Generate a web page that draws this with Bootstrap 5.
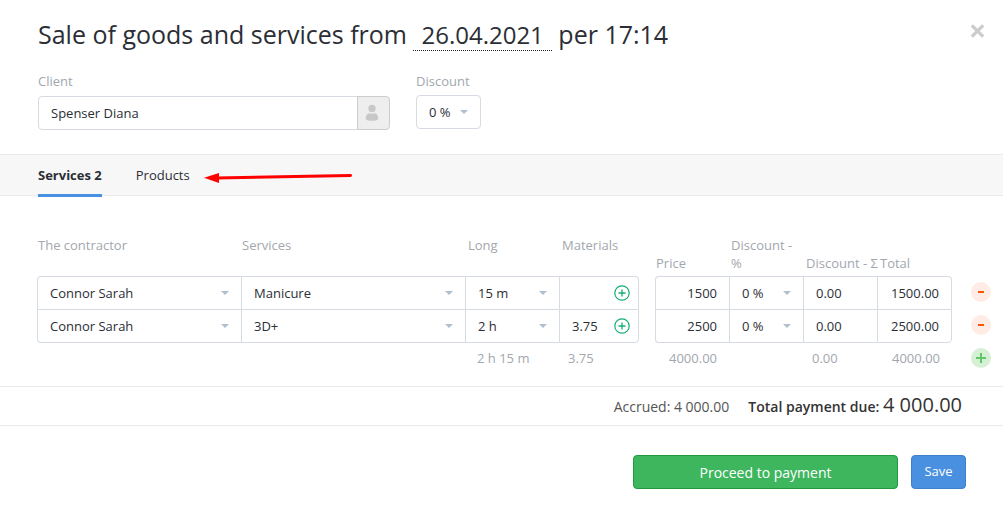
<!DOCTYPE html>
<html lang="en">
<head>
<meta charset="utf-8">
<meta name="viewport" content="width=device-width, initial-scale=1">
<title>Sale of goods and services</title>
<link rel="stylesheet" href="https://cdn.jsdelivr.net/npm/bootstrap@5.3.0/dist/css/bootstrap.min.css">
<style>
  body { font-family: "Open Sans", sans-serif; font-size: 13px; line-height: 18px; color: #2b2e35; background: #fff; }
  .sheet-head { padding: 16px 17px 24px 38px; }
  .sheet-title { font-size: 25px; line-height: 36px; font-weight: 400; color: #2b2e35; }
  .date-link { color: inherit; text-decoration: none; font-size: 24px; padding: 0 8px; border-bottom: 1px dotted #1f2229; line-height: 30px; display: inline-block; }
  .close-x { width: 16px; height: 16px; margin: 7px 0 0; color: #ccc; line-height: 0; }
  .muted-text, .sale-table th, .sale-table tfoot td { color: #a2a7ae; font-weight: 400; }
  .fields { gap: 26px; }
  .client-box { width: 352px; max-width: 100%; }
  .fields label { margin-bottom: 6px; }
  .fields .discount-box label { margin-bottom: 5px; }
  .fields .form-control, .fields .form-select { height: 34px; font-size: 13px; line-height: 18px; border-color: #d5dae3; border-radius: 4px; color: #2b2e35; padding: 0 12px; }
  .user-btn { width: 33px; background: #eee; border: 1px solid #ccc; border-radius: 4px; line-height: 0; }
  select.arrow-select { appearance: none; -webkit-appearance: none; background: #fff url("data:image/svg+xml,%3Csvg xmlns='http://www.w3.org/2000/svg' viewBox='0 0 8 4'%3E%3Cpath d='M0 0h8L4 4z' fill='%23afbfd0'/%3E%3C/svg%3E") no-repeat right 12px center / 8px 4px; }
  .fields .discount-select { width: 65px; }
  .tab-strip { background: #f7f7f7; border-top: 1px solid #ebebeb; border-bottom: 1px solid #ebebeb; padding-left: 38px; }
  .tab-strip .nav { gap: 34px; height: 40px; margin-bottom: 0; }
  .tab-strip .nav-link { padding: 11px 0 10px; height: 42px; color: #2b2e35; font-size: 13px; line-height: 18px; border-bottom: 3px solid transparent; border-radius: 0; }
  .tab-strip .nav-link.active { font-weight: 700; border-color: #4a90e2; }
  .hint-arrow { margin: 17px 0 0 14px; }
  .sale-area { padding: 40px 0 12px 37px; }
  .sale-table { width: 100%; table-layout: fixed; border-collapse: separate; border-spacing: 0; }
  .sale-table th { height: 40px; padding: 0 0 4px 1px; vertical-align: bottom; white-space: nowrap; }
  .sale-table th.high { vertical-align: top; }
  .sale-table th.inset { padding-left: 3px; }
  .sale-table th.wraps { white-space: normal; padding-left: 2px; }
  .sale-table .cell { height: 33px; padding: 0; border-top: 1px solid #d5dae3; border-left: 1px solid #d5dae3; }
  .sale-table .cell.last { border-right: 1px solid #d5dae3; }
  .sale-table .end .cell { height: 34px; border-bottom: 1px solid #d5dae3; }
  .start .cell.first { border-top-left-radius: 4px; }
  .start .cell.last { border-top-right-radius: 4px; }
  .end .cell.first { border-bottom-left-radius: 4px; }
  .end .cell.last { border-bottom-right-radius: 4px; }
  .cell input, .cell select { display: block; width: 100%; height: 32px; border: 0; padding: 0 12px; color: #2b2e35; background-color: transparent; font-size: 13px; }
  .cell input.mat { flex: 1 1 0; min-width: 0; padding-right: 0; }
  .sale-table tfoot td { height: 31px; padding: 0 12px 2px; vertical-align: middle; white-space: nowrap; }
  .sale-table tfoot td.near { padding-left: 9px; }
  .sale-table td.act, .sale-table tfoot td.act { padding: 0 12px 2px 0; vertical-align: middle; text-align: right; line-height: 0; }
  .round-btn { width: 20px; height: 20px; border: 0; border-radius: 50%; padding: 0; display: inline-block; vertical-align: middle; line-height: 0; }
  .round-btn svg { display: block; }
  .btn-del { background: #ffece4; color: #ff5500; }
  .btn-add { background: #d5f0d5; color: #61c76a; }
  .mat-btn { width: 16px; height: 16px; padding: 0; border: 0; background: none; color: #13ae73; margin-right: 8px; line-height: 0; }
  .sum-bar { border-top: 1px solid #ebebeb; border-bottom: 1px solid #ebebeb; min-height: 40px; padding: 3px 41px 0 0; font-size: 14px; line-height: 30px; color: #333; gap: 19px; }
  .sum-bar .accrued { color: #555; }
  .sum-bar .due { font-weight: 600; }
  .sum-bar .amount { font-size: 20px; font-weight: 500; }
  .actions { padding: 29px 37px 24px; gap: 13px; }
  .actions .btn { height: 34px; padding: 0; border-radius: 4px; color: #fff; font-size: 13px; }
  .actions .pay { width: 265px; background: #3db65e; border-color: #1f9a3c; font-size: 14px; font-weight: 500; }
  .actions .save { width: 55px; background: #4a90e0; border-color: #3e7fc9; }
</style>
</head>
<body>
<main>
  <header class="sheet-head">
    <div class="d-flex justify-content-between align-items-start">
      <h1 class="sheet-title mb-0">Sale of goods and services from <a class="date-link" href="#">26.04.2021</a> per 17:14</h1>
      <button type="button" class="close-x btn p-0 border-0" aria-label="Close"><svg width="16" height="16" viewBox="0 0 16 16"><path d="M1.800 2.400 13.200 13.600M13.200 2.400 1.800 13.600" stroke="currentColor" stroke-width="3.400" fill="none"/></svg></button>
    </div>
    <form class="fields d-flex align-items-start flex-wrap">
      <div class="client-box mt-3 pt-1">
        <label class="muted-text d-block" for="client">Client</label>
        <div class="input-group flex-nowrap">
          <input id="client" class="form-control" type="text" value="Spenser Diana">
          <button type="button" class="user-btn btn p-0 pe-1" aria-label="Client card"><svg width="14" height="18" viewBox="0 0 14 18"><circle cx="7" cy="4.500" r="3.700" fill="#c8c8c8"/><path d="M.7 14.500C.7 11 3 9.300 4.700 9.300c1.400.7 3.200.7 4.600 0 1.700 0 4 1.700 4 5.200 0 1.700-2 2.300-6.300 2.300S.7 16.200.7 14.500z" fill="#c8c8c8"/></svg></button>
        </div>
      </div>
      <div class="discount-box mt-3 pt-1">
        <label class="muted-text d-block" for="disc">Discount</label>
        <select id="disc" class="form-select arrow-select discount-select"><option>0 %</option></select>
      </div>
    </form>
  </header>

  <div class="tab-strip d-flex">
    <ul class="nav">
      <li class="nav-item"><a class="nav-link active" href="#services">Services 2</a></li>
      <li class="nav-item"><a class="nav-link" href="#products">Products</a></li>
    </ul>
    <svg class="hint-arrow" width="149" height="12" viewBox="0 0 149 12" aria-hidden="true"><path d="M12 6 146.500 3.500" stroke="#f00" stroke-width="3" stroke-linecap="round"/><path d="M0 5.800 15 1v10z" fill="#f00"/></svg>
  </div>

  <section class="sale-area" id="services">
    <table class="sale-table">
      <colgroup><col style="width:204px"><col><col style="width:94px"><col style="width:80px"><col style="width:16px"><col style="width:74px"><col style="width:74px"><col style="width:74px"><col style="width:75px"><col style="width:51px"></colgroup>
      <thead>
        <tr>
          <th class="high" scope="col">The contractor</th><th class="high" scope="col">Services</th><th class="high inset" scope="col">Long</th><th class="high inset" scope="col">Materials</th><td></td>
          <th scope="col">Price</th><th class="wraps" scope="col">Discount - %</th><th class="inset" scope="col">Discount - Σ</th><th class="inset" scope="col">Total</th><td></td>
        </tr>
      </thead>
      <tbody>
        <tr class="start">
          <td class="cell first"><select class="arrow-select" aria-label="The contractor"><option>Connor Sarah</option></select></td>
          <td class="cell"><select class="arrow-select" aria-label="Service"><option>Manicure</option></select></td>
          <td class="cell"><select class="arrow-select" aria-label="Long"><option>15 m</option></select></td>
          <td class="cell last"><div class="d-flex align-items-center"><input class="mat" type="text" aria-label="Materials"><button type="button" class="mat-btn" aria-label="Add materials"><svg width="16" height="16" viewBox="0 0 16 16" fill="none" stroke="currentColor"><circle cx="8" cy="8" r="7.200" stroke-width="1.200"/><path d="M8 4.500v7M4.500 8h7" stroke-width="1.300"/></svg></button></div></td>
          <td></td>
          <td class="cell first"><input class="text-end" type="text" aria-label="Price" value="1500"></td>
          <td class="cell"><select class="arrow-select" aria-label="Discount, %"><option>0 %</option></select></td>
          <td class="cell"><input type="text" aria-label="Discount, sum" value="0.00"></td>
          <td class="cell last"><input class="text-end" type="text" aria-label="Total" value="1500.00"></td>
          <td class="act"><button type="button" class="round-btn btn-del" aria-label="Remove row"><svg width="20" height="20" viewBox="0 0 20 20"><path d="M7 10h6" stroke="currentColor" stroke-width="2"/></svg></button></td>
        </tr>
        <tr class="end">
          <td class="cell first"><select class="arrow-select" aria-label="The contractor"><option>Connor Sarah</option></select></td>
          <td class="cell"><select class="arrow-select" aria-label="Service"><option>3D+</option></select></td>
          <td class="cell"><select class="arrow-select" aria-label="Long"><option>2 h</option></select></td>
          <td class="cell last"><div class="d-flex align-items-center"><input class="mat" type="text" aria-label="Materials" value="3.75"><button type="button" class="mat-btn" aria-label="Add materials"><svg width="16" height="16" viewBox="0 0 16 16" fill="none" stroke="currentColor"><circle cx="8" cy="8" r="7.200" stroke-width="1.200"/><path d="M8 4.500v7M4.500 8h7" stroke-width="1.300"/></svg></button></div></td>
          <td></td>
          <td class="cell first"><input class="text-end" type="text" aria-label="Price" value="2500"></td>
          <td class="cell"><select class="arrow-select" aria-label="Discount, %"><option>0 %</option></select></td>
          <td class="cell"><input type="text" aria-label="Discount, sum" value="0.00"></td>
          <td class="cell last"><input class="text-end" type="text" aria-label="Total" value="2500.00"></td>
          <td class="act"><button type="button" class="round-btn btn-del" aria-label="Remove row"><svg width="20" height="20" viewBox="0 0 20 20"><path d="M7 10h6" stroke="currentColor" stroke-width="2"/></svg></button></td>
        </tr>
      </tbody>
      <tfoot>
        <tr>
          <td></td><td></td><td>2 h 15 m</td><td class="near">3.75</td><td class="p-0"></td>
          <td class="text-end">4000.00</td><td></td><td class="near">0.00</td><td class="text-end">4000.00</td>
          <td class="act"><button type="button" class="round-btn btn-add" aria-label="Add row"><svg width="20" height="20" viewBox="0 0 20 20"><path d="M5 10h10M10 5v10" stroke="currentColor" stroke-width="2"/></svg></button></td>
        </tr>
      </tfoot>
    </table>
  </section>

  <div class="sum-bar d-flex justify-content-end align-items-baseline">
    <span class="accrued">Accrued: 4 000.00</span>
    <span class="due">Total payment due: <span class="amount">4 000.00</span></span>
  </div>
  <div class="actions d-flex justify-content-end">
    <button type="button" class="btn pay">Proceed to payment</button>
    <button type="button" class="btn save">Save</button>
  </div>
</main>
<script src="https://cdn.jsdelivr.net/npm/bootstrap@5.3.0/dist/js/bootstrap.bundle.min.js"></script>
</body>
</html>
